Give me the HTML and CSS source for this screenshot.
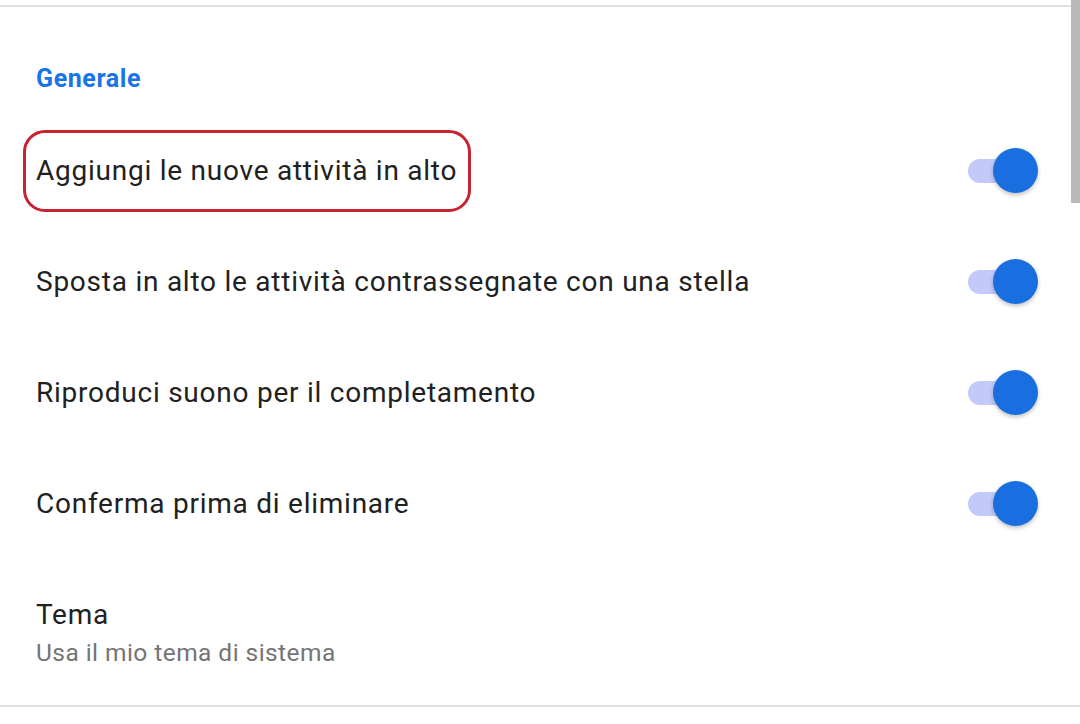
FILE: index.html
```html
<!DOCTYPE html>
<html lang="it">
<head>
<meta charset="utf-8">
<link rel="stylesheet" href="styles.css">
</head>
<body>
<div class="page">
  <div class="topline"></div>
  <div class="section-title">Generale</div>
  <div class="row">
    <span class="label highlighted">Aggiungi le nuove attività in alto</span>
    <div class="switch"><div class="track"></div><div class="thumb"></div></div>
  </div>
  <div class="row">
    <span class="label">Sposta in alto le attività contrassegnate con una stella</span>
    <div class="switch"><div class="track"></div><div class="thumb"></div></div>
  </div>
  <div class="row">
    <span class="label">Riproduci suono per il completamento</span>
    <div class="switch"><div class="track"></div><div class="thumb"></div></div>
  </div>
  <div class="row">
    <span class="label">Conferma prima di eliminare</span>
    <div class="switch"><div class="track"></div><div class="thumb"></div></div>
  </div>
  <div class="row-two">
    <div class="label">Tema</div>
    <div class="sub">Usa il mio tema di sistema</div>
  </div>
  <div class="bottomline"></div>
  <div class="scrollbar"></div>
</div>
</body>
</html>
```
FILE: styles.css
```css
html, body {
  margin: 0;
  padding: 0;
  background: #ffffff;
}
body {
  font-family: Roboto, "Noto Sans", sans-serif;
  color: #202124;
}
.page {
  position: relative;
  width: 1080px;
  height: 724px;
  overflow: hidden;
}
.topline {
  margin-top: 5px;
  height: 2px;
  background: #e0e0e0;
}
.section-title {
  height: 108px;
  box-sizing: border-box;
  padding: 57px 0 0 36px;
  font-size: 25px;
  font-weight: 700;
  line-height: 30px;
  letter-spacing: 0.6px;
  color: #1a73e8;
}
.row {
  height: 111px;
  display: flex;
  align-items: center;
  justify-content: space-between;
  padding: 0 42px 0 36px;
}
.label {
  font-size: 28px;
  line-height: 32px;
  letter-spacing: 0.027em;
  color: #212121;
}
.highlighted {
  display: inline-block;
  border: 3px solid #c62430;
  border-radius: 22px;
  padding: 22px 11px 22px 10px;
  margin-left: -13px;
}
.switch {
  position: relative;
  width: 70px;
  height: 46px;
}
.track {
  position: absolute;
  left: 0;
  top: 11px;
  width: 56px;
  height: 24px;
  border-radius: 12px;
  background: #c3c9f8;
}
.thumb {
  position: absolute;
  right: 0;
  top: 0;
  width: 45px;
  height: 45px;
  border-radius: 50%;
  background: #1a6fe0;
  box-shadow: 0 2px 4px rgba(0, 0, 0, 0.25);
}
.row-two {
  padding: 40px 36px 0 36px;
  height: 146px;
  box-sizing: border-box;
}
.sub {
  margin-top: 9px;
  font-size: 24.5px;
  line-height: 26px;
  letter-spacing: 0.018em;
  color: #757575;
}
.bottomline {
  height: 2px;
  background: #e0e0e0;
}
.scrollbar {
  position: absolute;
  right: 0;
  top: 0;
  width: 9px;
  height: 203px;
  background: #b9b9b9;
}
```
